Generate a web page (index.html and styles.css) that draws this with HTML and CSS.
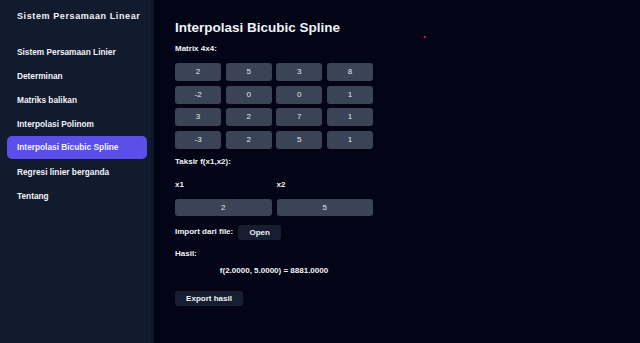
FILE: index.html
```html
<!DOCTYPE html>
<html lang="id">
<head>
    <meta charset="UTF-8">
    <meta name="viewport" content="width=device-width, initial-scale=1.0">
    <title>Sistem Persamaan Linear</title>
    <link rel="stylesheet" href="styles.css">
</head>
<body>
    <div class="app">
        <aside class="sidebar">
            <div class="brand">Sistem Persamaan Linear</div>
            <nav class="menu">
                <a class="menu-item">Sistem Persamaan Linier</a>
                <a class="menu-item">Determinan</a>
                <a class="menu-item">Matriks balikan</a>
                <a class="menu-item">Interpolasi Polinom</a>
                <a class="menu-item active">Interpolasi Bicubic Spline</a>
                <a class="menu-item">Regresi linier berganda</a>
                <a class="menu-item">Tentang</a>
            </nav>
        </aside>

        <main class="content">
            <h1 class="title">Interpolasi Bicubic Spline</h1>
            <div class="label">Matrix 4x4:</div>
            <div class="matrix">
                <div class="cell">2</div><div class="cell">5</div><div class="cell">3</div><div class="cell">8</div>
                <div class="cell">-2</div><div class="cell">0</div><div class="cell">0</div><div class="cell">1</div>
                <div class="cell">3</div><div class="cell">2</div><div class="cell">7</div><div class="cell">1</div>
                <div class="cell">-3</div><div class="cell">2</div><div class="cell">5</div><div class="cell">1</div>
            </div>

            <div class="label taksir">Taksir f(x1,x2):</div>
            <div class="inputs">
                <div class="field">
                    <div class="label">x1</div>
                    <div class="input">2</div>
                </div>
                <div class="field">
                    <div class="label">x2</div>
                    <div class="input">5</div>
                </div>
            </div>

            <div class="import-row">
                <span class="label">Import dari file:</span>
                <button class="btn">Open</button>
            </div>

            <div class="label hasil">Hasil:</div>
            <div class="result">f(2.0000, 5.0000) = 8881.0000</div>

            <button class="btn export">Export hasil</button>
        </main>
    </div>
    <span class="dot"></span>
</body>
</html>
```

FILE: styles.css
```css
html, body {
    margin: 0;
    height: 100%;
}

body {
    background-color: #030516;
    color: #f1f3f7;
    font-family: "Liberation Sans", Arial, sans-serif;
}

.app {
    display: flex;
    height: 100%;
}

.sidebar {
    box-sizing: border-box;
    width: 154px;
    flex-shrink: 0;
    background-color: #121a2e;
    border-right: 3px solid #0d1426;
    padding: 10px 4px 0 7px;
}

.brand {
    padding-left: 10px;
    font-size: 9px;
    font-weight: bold;
    letter-spacing: 0.6px;
    line-height: 12px;
    white-space: nowrap;
}

.menu {
    display: flex;
    flex-direction: column;
    margin-top: 18px;
}

.menu-item {
    display: block;
    height: 24px;
    line-height: 24px;
    padding-left: 10px;
    font-size: 8.3px;
    font-weight: bold;
    border-radius: 5px;
    white-space: nowrap;
}

.menu-item.active {
    background-color: #5a4fe6;
    height: 23px;
    line-height: 23px;
    margin-bottom: 1px;
}

.content {
    width: 198px;
    padding: 19px 0 0 21px;
}

.title {
    margin: 0;
    font-size: 13.5px;
    line-height: 18px;
    font-weight: bold;
}

.label {
    font-size: 8px;
    line-height: 10px;
    font-weight: bold;
    margin-top: 7px;
}

.matrix {
    display: grid;
    grid-template-columns: repeat(4, 1fr);
    gap: 4.5px 4.5px;
    margin-top: 9px;
}

.cell, .input {
    height: 18px;
    line-height: 18px;
    text-align: center;
    font-size: 8px;
    color: #e3e6ec;
    background-color: #3a4456;
    border-radius: 3px;
}

.taksir {
    margin-top: 8px;
}

.inputs {
    display: flex;
    gap: 5px;
    margin-top: 13px;
}

.field {
    flex: 1;
}

.field .label {
    margin-top: 0;
}

.field .input {
    height: 17px;
    line-height: 17px;
    margin-top: 9px;
}

.import-row {
    display: flex;
    align-items: center;
    gap: 5px;
    margin-top: 9px;
}

.import-row .label {
    margin-top: 0;
}

.btn {
    height: 15px;
    border: none;
    border-radius: 3px;
    background-color: #171e31;
    color: #f1f3f7;
    font-family: inherit;
    font-size: 8px;
    font-weight: bold;
    padding: 0 10px;
    width: 43px;
}

.hasil {
    margin-top: 9px;
}

.result {
    margin-top: 7px;
    font-size: 8px;
    line-height: 10px;
    font-weight: bold;
    text-align: center;
}

.export {
    display: block;
    width: 68px;
    margin-top: 15px;
}

.dot {
    position: absolute;
    left: 424px;
    top: 36px;
    width: 2px;
    height: 2px;
    background-color: #b0203a;
}
```
